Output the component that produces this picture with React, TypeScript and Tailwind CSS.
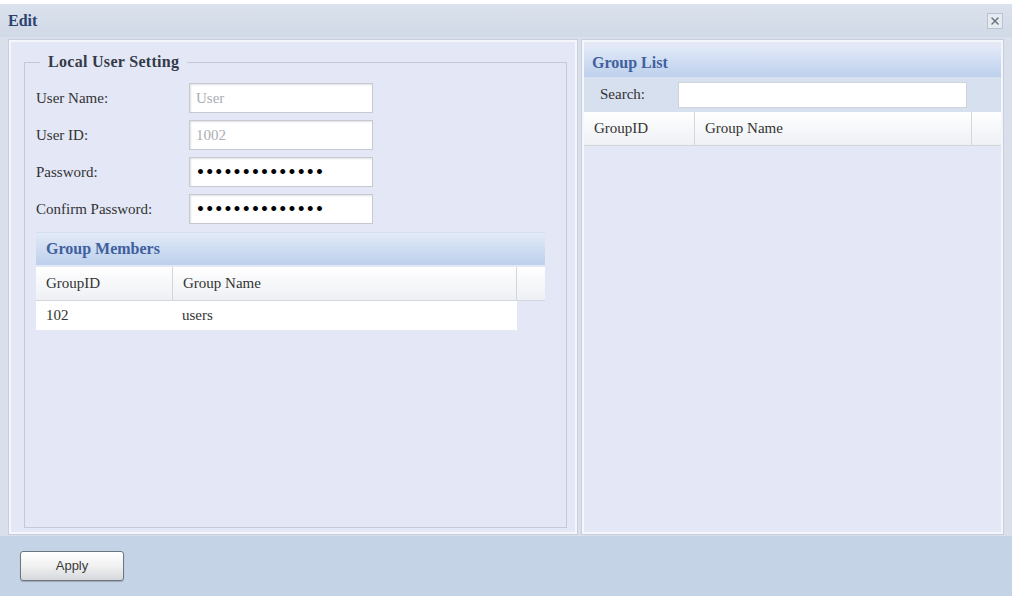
import { X } from 'lucide-react';

const serif = { fontFamily: '"Liberation Serif", "DejaVu Serif", serif' };

function TextField({ value, muted, dots }: { value: string; muted?: boolean; dots?: boolean }) {
  return (
    <div className="w-[184px] h-[30px] bg-white border border-[#c6c9cf] shadow-[inset_1px_1px_2px_rgba(0,0,0,0.12)] flex items-center px-[6px]">
      {dots ? (
        <span className="text-[14px] leading-none tracking-[0.2px] text-black font-bold" style={{ fontFamily: '"DejaVu Sans", sans-serif' }}>
          {value}
        </span>
      ) : (
        <span className={muted ? 'text-[15px] text-[#a9adb4]' : 'text-[15px] text-[#222]'}>{value}</span>
      )}
    </div>
  );
}

function SectionHeader({ title }: { title: string }) {
  return (
    <div className="h-[33px] flex items-center px-[10px] bg-gradient-to-b from-[#e2ebf8] to-[#bccfeb] border-t border-[#d4def0]">
      <span className="text-[16px] font-bold text-[#40609e]">{title}</span>
    </div>
  );
}

function TableHead({ cols }: { cols: { label: string; w: string }[] }) {
  return (
    <div className="flex h-[34px] bg-gradient-to-b from-white to-[#eef0f4] border-b border-[#d3d6dd]">
      {cols.map((c, i) => (
        <div
          key={i}
          className={`${c.w} flex items-center px-[10px] text-[15px] text-[#333] border-r border-[#d3d6dd] last:border-r-0`}
        >
          {c.label}
        </div>
      ))}
    </div>
  );
}

const fields = [
  { label: 'User Name:', value: 'User', muted: true },
  { label: 'User ID:', value: '1002', muted: true },
  { label: 'Password:', value: '••••••••••••••', dots: true },
  { label: 'Confirm Password:', value: '••••••••••••••', dots: true },
];

export default function App() {
  return (
    <div className="w-[1012px] h-[596px] bg-white flex flex-col overflow-hidden" style={serif}>
      {/* Title bar */}
      <div className="mt-[4px] h-[33px] bg-gradient-to-b from-[#dbe2ed] to-[#d0d9e6] flex items-center justify-between pl-[8px] pr-[9px]">
        <span className="text-[16px] font-bold text-[#2d4270]">Edit</span>
        <div className="w-[16px] h-[16px] border border-[#b9c2ce] bg-[#e6ebf2] flex items-center justify-center">
          <X className="w-[12px] h-[12px] text-[#6b7380]" strokeWidth={3} />
        </div>
      </div>

      {/* Body */}
      <div className="flex-1 bg-[#d9e0eb] flex gap-[5px] pl-[9px] pr-[9px] pt-[3px] pb-[2px]">
        {/* Left panel */}
        <div className="w-[568px] bg-[#e3e7f6] border-2 border-[#f4f6fb] outline outline-1 outline-[#c8cfdb] pl-[13px] pr-[8px] pt-[11px] pb-[4px] flex flex-col">
          <fieldset className="flex-1 border border-[#c4c9d4] pl-[11px] pr-[11px] pt-[12px] flex flex-col">
            <legend className="ml-[4px] px-[8px] text-[16px] font-bold text-[#333a48] leading-[18px] tracking-[0.3px]">
              Local User Setting
            </legend>
            <div className="flex flex-col gap-[7px]">
              {fields.map((f) => (
                <div key={f.label} className="flex items-center">
                  <span className="w-[153px] text-[15px] text-[#333]">{f.label}</span>
                  <TextField value={f.value} muted={f.muted} dots={f.dots} />
                </div>
              ))}
            </div>

            <div className="mt-[8px] w-[509px]">
              <SectionHeader title="Group Members" />
              <div className="mt-[2px]">
                <TableHead
                  cols={[
                    { label: 'GroupID', w: 'w-[137px]' },
                    { label: 'Group Name', w: 'w-[344px]' },
                    { label: '', w: 'flex-1' },
                  ]}
                />
                <div className="flex h-[29px] w-[481px] bg-white">
                  <div className="w-[137px] flex items-center px-[10px] text-[15px] text-[#333]">102</div>
                  <div className="flex-1 flex items-center px-[9px] text-[15px] text-[#333]">users</div>
                </div>
              </div>
            </div>
          </fieldset>
        </div>

        {/* Right panel */}
        <div className="flex-1 bg-[#e3e7f6] border-2 border-[#f4f6fb] outline outline-1 outline-[#c8cfdb] pt-[6px] flex flex-col">
          <div className="h-[29px] flex items-center px-[8px] bg-gradient-to-b from-[#dfe8f7] to-[#bdd0ec]">
            <span className="text-[16px] font-bold text-[#40609e]">Group List</span>
          </div>
          <div className="h-[35px] bg-[#d7e0ee] flex items-center pl-[16px] pr-[34px]">
            <span className="w-[78px] text-[15px] text-[#333]">Search:</span>
            <div className="flex-1 h-[26px] bg-white border border-[#cfd4dc]" />
          </div>
          <TableHead
            cols={[
              { label: 'GroupID', w: 'w-[111px]' },
              { label: 'Group Name', w: 'w-[277px]' },
              { label: '', w: 'flex-1' },
            ]}
          />
        </div>
      </div>

      {/* Footer */}
      <div className="h-[60px] bg-[#c5d3e6] flex items-center pl-[20px]">
        <button
          className="w-[104px] h-[30px] rounded-[3px] border border-[#6d7581] bg-gradient-to-b from-white via-[#f1f1f1] to-[#d6d8dc] text-[13px] text-[#3a3a3a] shadow-[0_1px_1px_rgba(0,0,0,0.2)]"
          style={{ fontFamily: '"Liberation Sans", sans-serif' }}
        >
          Apply
        </button>
      </div>
    </div>
  );
}
